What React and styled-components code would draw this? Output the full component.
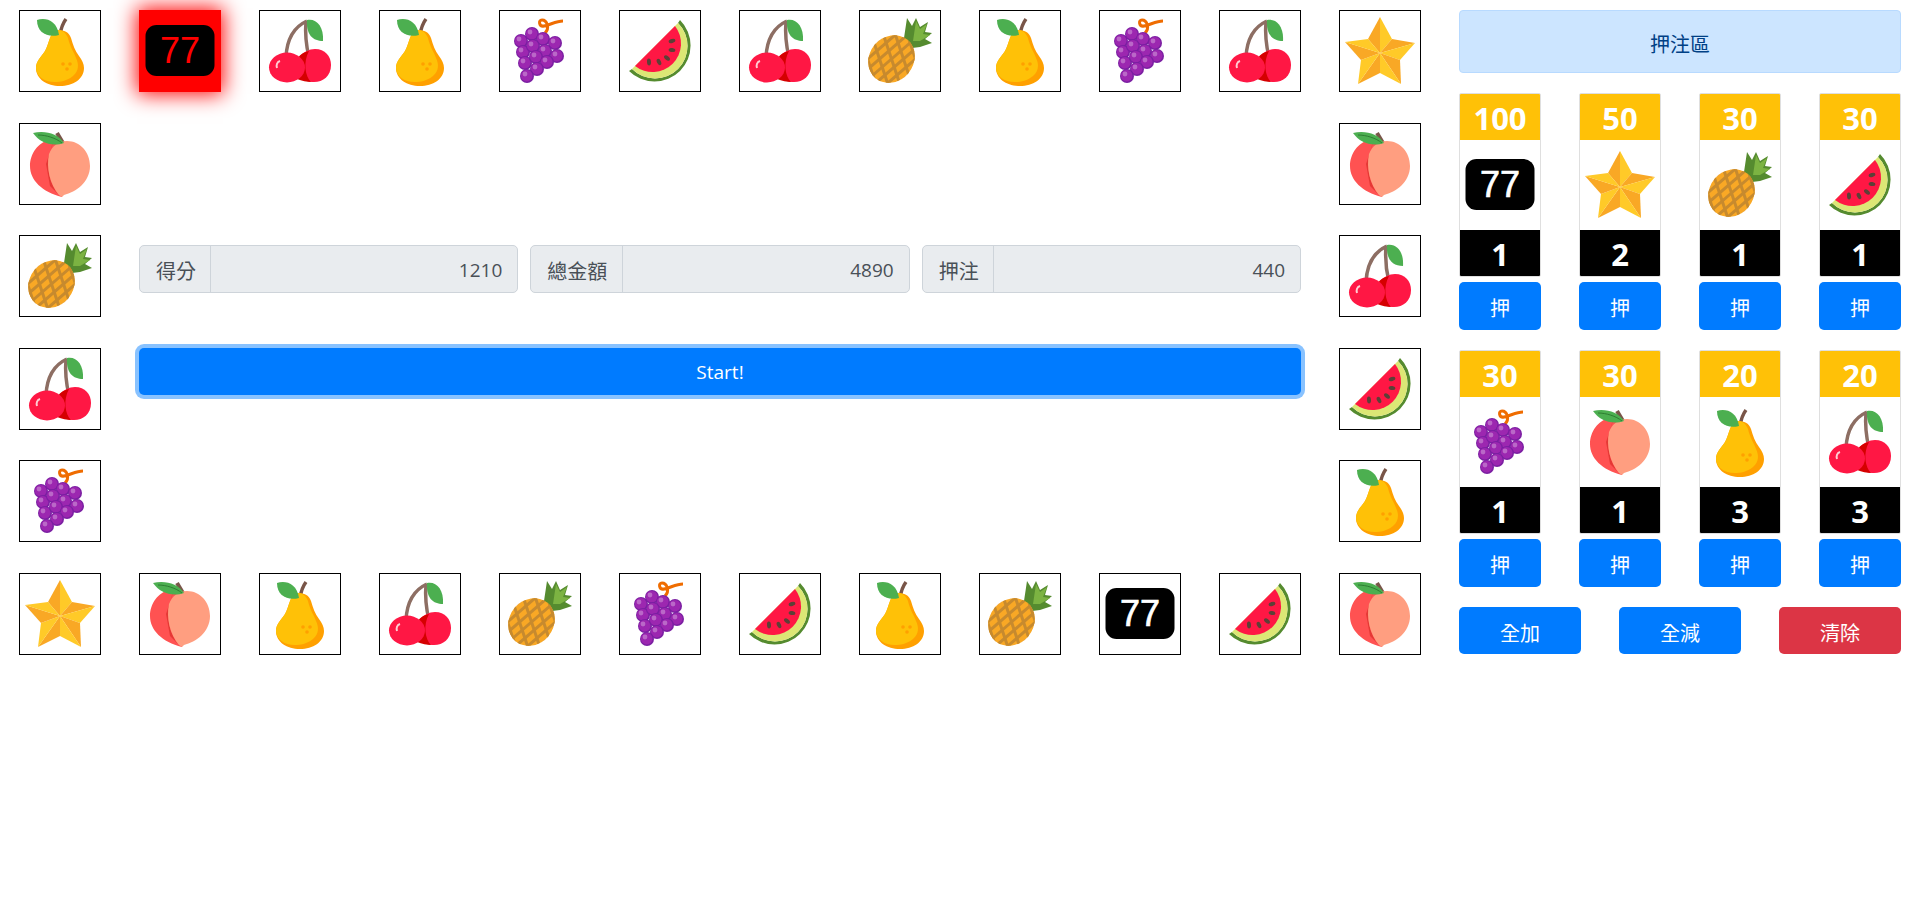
import React, { useId } from 'react';
import styled, { createGlobalStyle } from 'styled-components';

const GlobalStyle = createGlobalStyle`
  html, body {
    margin: 0;
    padding: 0;
    background: #fff;
    font-family: 'Open Sans', 'Noto Sans CJK TC', sans-serif;
    color: #212529;
  }
  * {
    box-sizing: border-box;
  }
`;

const Page = styled.div`
  display: flex;
  width: 1920px;
  height: 918px;
  overflow: hidden;
`;

const Board = styled.div`
  display: grid;
  grid-template-columns: repeat(12, 120px);
  grid-auto-rows: 82.6px;
  row-gap: 30px;
  width: 1440px;
  padding-top: 10px;
  align-content: start;
`;

const Cell = styled.div`
  width: 82px;
  height: 82px;
  justify-self: center;
  border: 1px solid ${props => (props.$active ? 'red' : '#000')};
  background: ${props => (props.$active ? 'red' : '#fff')};
  box-shadow: ${props => (props.$active ? '0 0 20px 2px red' : 'none')};
`;

const Center = styled.div`
  grid-column: span 10;
  grid-row: span 4;
  display: flex;
  flex-direction: column;
  gap: 55px;
  padding: 122px 19px 0;
`;

const InputRow = styled.div`
  display: grid;
  grid-template-columns: repeat(3, 1fr);
  column-gap: 12px;
`;

const InputGroup = styled.div`
  display: flex;
  height: 48px;
  border: 1px solid #ced4da;
  border-radius: 5px;
  background: #e9ecef;
  color: #495057;
`;

const InputLabel = styled.div`
  display: flex;
  align-items: center;
  width: ${props => (props.$wide ? 92 : 71)}px;
  padding: 3px 0 0 16px;
  border-right: 1px solid #ced4da;
  font-size: 20px;
`;

const InputValue = styled.div`
  flex: 1;
  display: flex;
  align-items: center;
  justify-content: flex-end;
  padding: 3px 15px 0 0;
  font-size: 19px;
`;

const StartButton = styled.button`
  height: 47px;
  padding: 1px 0 0;
  border: 0;
  border-radius: 5px;
  background: #007bff;
  color: #fff;
  font-family: inherit;
  font-size: 19px;
  box-shadow: 0 0 0 4px rgba(38, 143, 255, 0.55);
`;

const Side = styled.div`
  display: flex;
  flex-direction: column;
  gap: 20px;
  width: 480px;
  padding: 10px 19px 0;
`;

const Alert = styled.div`
  display: flex;
  align-items: center;
  justify-content: center;
  height: 63px;
  padding-top: 3px;
  border: 1px solid #b8daff;
  border-radius: 4px;
  background: #cce5ff;
  color: #004085;
  font-size: 20px;
`;

const BetGrid = styled.div`
  display: grid;
  grid-template-columns: repeat(4, 82px);
  justify-content: space-between;
  row-gap: 20px;
`;

const BetColumn = styled.div`
  display: flex;
  flex-direction: column;
  gap: 5px;
`;

const BetCard = styled.div`
  border: 1px solid #dfdfdf;
  border-radius: 2px;
  overflow: hidden;
`;

const BetNumber = styled.div`
  height: 46px;
  display: flex;
  align-items: center;
  justify-content: center;
  padding-top: 2px;
  background: ${props => props.$bg};
  color: #fff;
  font-size: 31px;
  font-weight: 700;
`;

const BetImage = styled.div`
  height: 90px;
  padding-top: 5px;
`;

const Button = styled.button`
  height: ${props => props.$height}px;
  padding: 3px 0 0;
  border: 0;
  border-radius: 5px;
  background: ${props => (props.$danger ? '#dc3545' : '#007bff')};
  color: #fff;
  font-family: inherit;
  font-size: 20px;
`;

const Actions = styled.div`
  display: flex;
  justify-content: space-between;
  & > button {
    width: 122px;
  }
`;

const FruitSvg = styled.svg`
  display: block;
  width: 80px;
  height: 80px;
`;

const Pear = () => (
  <FruitSvg viewBox="0 0 80 80">
    <path d="M40 24 C41 17 43 12 46 8" stroke="#795548" strokeWidth="3.5" fill="none" />
    <path d="M38 19 C44 19 49 21 51 27 C53 34 55 40 59 45 C62 49 64 53 64 57 C64 68 53 75 40 75 C27 75 16 68 16 57 C16 50 21 46 25 40 C29 34 30 19 38 19Z" fill="#ffa000" />
    <path d="M38 19 C43 19 46 22 48 27 C50 36 54 41 56 47 C59 53 59 60 53 65 C47 70 40 71 35 71 C24 71 16 65 16 57 C16 50 21 46 25 40 C29 34 30 19 38 19Z" fill="#ffc107" />
    <path d="M17 9 C25 6 37 9 39 24 C28 27 17 22 17 9Z" fill="#4caf50" />
    <circle cx="43" cy="53" r="1.8" fill="#ffa000" />
    <circle cx="50" cy="53" r="1.8" fill="#ffa000" />
    <circle cx="47" cy="58" r="1.8" fill="#ffa000" />
  </FruitSvg>
);

const Cherry = () => (
  <FruitSvg viewBox="0 0 80 80">
    <path d="M47 10 C36 15 27 26 26 46" stroke="#8d6e63" strokeWidth="3.5" fill="none" />
    <path d="M46 10 C45 22 46 34 49 46" stroke="#8d6e63" strokeWidth="3.5" fill="none" />
    <path d="M47 9 C56 7 64 15 63 30 C53 30 46 24 47 9Z" fill="#4caf50" />
    <path d="M55 38 C65 38 71 45 71 54 C71 65 63 71 54 71 C48 71 44 69 40 65 L40 45 C44 41 49 38 55 38Z" fill="#ff1744" />
    <path d="M51 71 C45 65 43 51 49 40 C44 41 38 44 37 50 L37 68 C42 70 47 71 51 71Z" fill="#d50000" />
    <ellipse cx="27" cy="56.5" rx="18" ry="15" fill="#ff1744" />
    <path d="M17 57 C16 54 17 51 20 50" stroke="#ffcdd2" strokeWidth="2" fill="none" />
  </FruitSvg>
);

const grapes = [
  [21, 30], [32, 23], [43, 28], [55, 32], [23, 41], [33, 35], [45, 40],
  [57, 45], [25, 52], [36, 46], [47, 51], [37, 58], [27, 65],
];

const Grape = () => (
  <FruitSvg viewBox="0 0 80 80">
    <path d="M45 22 C50 17 47 9 42 9 C38 9 39 16 44 15 C50 14 56 10 63 10" stroke="#ef6c00" strokeWidth="3" fill="none" />
    {grapes.map(([x, y]) => (
      <g key={`${x}-${y}`}>
        <circle cx={x} cy={y} r="7" fill="#7b1fa2" />
        <circle cx={x - 0.3} cy={y - 0.3} r="5.8" fill="#9c27b0" />
        <circle cx={x - 2} cy={y - 2} r="2.4" fill="#ba68c8" />
      </g>
    ))}
  </FruitSvg>
);

const Melon = () => (
  <FruitSvg viewBox="0 0 80 80">
    <path d="M60 9 A35.5 35.5 0 0 1 9 60 L12 58 A32 32 0 0 0 58 12Z" fill="#558b2f" />
    <path d="M58 12 A32 32 0 0 1 12 58Z" fill="#dce775" />
    <path d="M55 15 A28.5 28.5 0 0 1 15 55Z" fill="#ff1744" />
    <ellipse cx="52" cy="30" rx="3.4" ry="2" transform="rotate(-15 52 30)" fill="#5d4037" />
    <ellipse cx="52" cy="39" rx="3.4" ry="2" transform="rotate(10 52 39)" fill="#5d4037" />
    <ellipse cx="47" cy="47" rx="3.4" ry="2" transform="rotate(40 47 47)" fill="#5d4037" />
    <ellipse cx="39" cy="51" rx="3.4" ry="2" transform="rotate(65 39 51)" fill="#5d4037" />
    <ellipse cx="29" cy="51" rx="3.4" ry="2" transform="rotate(85 29 51)" fill="#5d4037" />
  </FruitSvg>
);

const latticeOffsets = [-36, -24, -12, 0, 12, 24, 36];

const Pineapple = () => {
  const clipId = 'pine' + useId().replace(/[^a-zA-Z0-9]/g, '');
  return (
    <FruitSvg viewBox="0 0 80 80">
      <path d="M44 27 L47 7 L52 15 L56 7 L60 16 L68 11 L65 21 L72 22 L65 28 L72 32 L60 36 L52 37Z" fill="#558b2f" />
      <path d="M53 30 L56 10 L60 18 L67 13 L63 23 L70 24 L60 30Z" fill="#7cb342" />
      <clipPath id={clipId}>
        <ellipse cx="31.5" cy="48" rx="22" ry="25" transform="rotate(40 31.5 48)" />
      </clipPath>
      <g clipPath={`url(#${clipId})`}>
        <rect x="0" y="15" width="65" height="65" fill="#f9a825" />
        <g stroke="#c78a2e" strokeWidth="3" fill="none">
          {latticeOffsets.map(o => (
            <React.Fragment key={o}>
              <path d={`M${o + 1.5} 74 L${o + 61.5} 22`} />
              <path d={`M${o + 21.5} 18 L${o + 41.5} 78`} />
            </React.Fragment>
          ))}
        </g>
      </g>
    </FruitSvg>
  );
};

const Peach = () => (
  <FruitSvg viewBox="0 0 80 80">
    <path d="M37 9 L43 19" stroke="#795548" strokeWidth="4" fill="none" />
    <path d="M30 16 C18 18 10 30 10 42 C10 56 22 68 42 73 L45 20 C40 16 35 15 30 16Z" fill="#ff5252" />
    <path d="M34 16 C28 30 24 52 38 70 L30 62 L26 40 Z" fill="#e53935" />
    <path d="M47 17 C60 17 70 28 70 42 C70 58 56 68 44 71 L42 73 L39 71 C30 60 26 44 29 30 C32 22 39 17 47 17Z" fill="#ff9e80" />
    <path d="M13 9 C24 6 38 9 44 19 C32 23 20 19 13 9Z" fill="#4caf50" />
    <path d="M18 11 C26 11 36 14 42 19" stroke="#2e7d32" strokeWidth="1" fill="none" />
  </FruitSvg>
);

const Star = () => (
  <FruitSvg viewBox="0 0 80 80">
    <path d="M40 6 L40 42 L28 28Z" fill="#f9a825" />
    <path d="M40 6 L52 28 L40 42Z" fill="#ffca28" />
    <path d="M52 28 L75 32 L40 42Z" fill="#f9a825" />
    <path d="M75 32 L60 49 L40 42Z" fill="#ffca28" />
    <path d="M60 49 L61 73 L40 42Z" fill="#f9a825" />
    <path d="M61 73 L40 62 L40 42Z" fill="#ffca28" />
    <path d="M40 62 L18 73 L40 42Z" fill="#f9a825" />
    <path d="M18 73 L21 49 L40 42Z" fill="#ffca28" />
    <path d="M21 49 L5 31 L40 42Z" fill="#f9a825" />
    <path d="M5 31 L28 28 L40 42Z" fill="#ffca28" />
  </FruitSvg>
);

const Seven = ({ color }) => (
  <FruitSvg viewBox="0 0 80 80">
    <rect x="5.5" y="14" width="69" height="51" rx="11" fill="#000" />
    <text
      x="40"
      y="52"
      textAnchor="middle"
      fontFamily="'Liberation Sans', sans-serif"
      fontSize="36"
      fill={color}
      stroke={color === '#fff' ? color : 'none'}
      strokeWidth="0.7"
    >
      77
    </text>
  </FruitSvg>
);

const icons = {
  pear: Pear,
  cherry: Cherry,
  grape: Grape,
  melon: Melon,
  pineapple: Pineapple,
  peach: Peach,
  star: Star,
  seven: Seven,
};

const Fruit = ({ name, color = '#fff' }) => {
  const Icon = icons[name];
  return <Icon color={color} />;
};

const topRow = ['pear', 'seven', 'cherry', 'pear', 'grape', 'melon', 'cherry', 'pineapple', 'pear', 'grape', 'cherry', 'star'];
const sideRows = [
  ['peach', 'peach'],
  ['pineapple', 'cherry'],
  ['cherry', 'melon'],
  ['grape', 'pear'],
];
const bottomRow = ['star', 'peach', 'pear', 'cherry', 'pineapple', 'grape', 'melon', 'pear', 'pineapple', 'seven', 'melon', 'peach'];

const bets = [
  { odds: 100, name: 'seven', count: 1 },
  { odds: 50, name: 'star', count: 2 },
  { odds: 30, name: 'pineapple', count: 1 },
  { odds: 30, name: 'melon', count: 1 },
  { odds: 30, name: 'grape', count: 1 },
  { odds: 30, name: 'peach', count: 1 },
  { odds: 20, name: 'pear', count: 3 },
  { odds: 20, name: 'cherry', count: 3 },
];

const stats = [
  { label: '得分', value: 1210 },
  { label: '總金額', value: 4890 },
  { label: '押注', value: 440 },
];

const App = () => (
  <Page>
    <GlobalStyle />
    <Board>
      {topRow.map((name, i) => (
        <Cell key={`top-${i}`} $active={i === 1}>
          <Fruit name={name} color={i === 1 ? 'red' : '#fff'} />
        </Cell>
      ))}
      <Cell>
        <Fruit name={sideRows[0][0]} />
      </Cell>
      <Center>
        <InputRow>
          {stats.map(stat => (
            <InputGroup key={stat.label}>
              <InputLabel $wide={stat.label.length > 2}>{stat.label}</InputLabel>
              <InputValue>{stat.value}</InputValue>
            </InputGroup>
          ))}
        </InputRow>
        <StartButton>Start!</StartButton>
      </Center>
      <Cell>
        <Fruit name={sideRows[0][1]} />
      </Cell>
      {sideRows.slice(1).map(([left, right], i) => (
        <React.Fragment key={`side-${i}`}>
          <Cell>
            <Fruit name={left} />
          </Cell>
          <Cell>
            <Fruit name={right} />
          </Cell>
        </React.Fragment>
      ))}
      {bottomRow.map((name, i) => (
        <Cell key={`bottom-${i}`}>
          <Fruit name={name} />
        </Cell>
      ))}
    </Board>
    <Side>
      <Alert>押注區</Alert>
      <BetGrid>
        {bets.map(bet => (
          <BetColumn key={bet.name}>
            <BetCard>
              <BetNumber $bg="#ffc107">{bet.odds}</BetNumber>
              <BetImage>
                <Fruit name={bet.name} />
              </BetImage>
              <BetNumber $bg="#000">{bet.count}</BetNumber>
            </BetCard>
            <Button $height={48}>押</Button>
          </BetColumn>
        ))}
      </BetGrid>
      <Actions>
        <Button $height={47}>全加</Button>
        <Button $height={47}>全減</Button>
        <Button $height={47} $danger>
          清除
        </Button>
      </Actions>
    </Side>
  </Page>
);

export default App;
